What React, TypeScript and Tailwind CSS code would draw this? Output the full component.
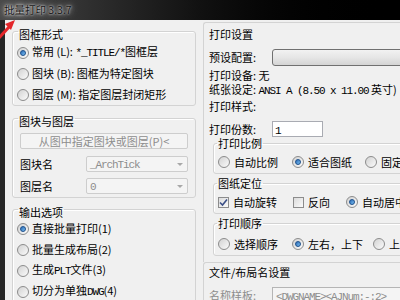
import React from "react";

const M = ({ children }: { children: React.ReactNode }) => (
  <span className="font-['Liberation_Mono',monospace] tracking-[-1.1px]">{children}</span>
);

function Radio({ on }: { on?: boolean }) {
  return (
    <span className="w-[12px] h-[12px] shrink-0 rounded-full border border-[#8c8c8c] bg-gradient-to-br from-[#d2d2d2] to-[#fbfbfb] flex items-center justify-center">
      {on && <span className="w-[6px] h-[6px] rounded-full border border-[#1b4f8c] bg-gradient-to-br from-[#2a6bb5] to-[#7cc0f2]" />}
    </span>
  );
}

function Check({ on }: { on?: boolean }) {
  return (
    <span className="w-[11px] h-[11px] shrink-0 border border-[#8c8c8c] bg-gradient-to-br from-[#dcdcdc] to-[#fafafa] flex items-center justify-center">
      {on && (
        <svg width="9" height="9" viewBox="0 0 9 9">
          <path d="M1 4.5 L3.5 7 L8 1.5" fill="none" stroke="#3b4f86" strokeWidth="1.6" />
        </svg>
      )}
    </span>
  );
}

function Combo({ value }: { value: React.ReactNode }) {
  return (
    <div className="flex-1 h-[16px] rounded-[2px] border border-[#cdcdcd] bg-[#f4f4f4] flex items-center text-[#8d8d8d] pl-[3px]">
      <span className="flex-1">{value}</span>
      <svg width="14" height="10" viewBox="0 0 14 10">
        <path d="M4 4 L10 4 L7 7 Z" fill="#a8a8a8" />
      </svg>
    </div>
  );
}

function Group({ title, children, className = "" }: { title: string; children: React.ReactNode; className?: string }) {
  return (
    <fieldset className={"border border-[#d3d3d3] rounded-[3px] shadow-[inset_1px_1px_0_#fff] " + className}>
      <legend className="ml-[5px] px-[1px] pt-[6px] leading-[12px]">{title}</legend>
      {children}
    </fieldset>
  );
}

function Sub({ title, children, className = "" }: { title: string; children: React.ReactNode; className?: string }) {
  return (
    <fieldset className={"ml-[4px] w-[240px] border border-[#d3d3d3] rounded-[3px] shadow-[inset_1px_1px_0_#fff] " + className}>
      <legend className="ml-[3px] px-[1px] leading-[12px]">{title}</legend>
      {children}
    </fieldset>
  );
}

export default function App() {
  return (
    <div className="relative w-[400px] h-[300px] overflow-hidden bg-black text-[11px] text-black font-['Noto_Sans_CJK_SC',sans-serif]">
      {/* title bar */}
      <div className="h-[20px] flex items-center pl-[4px] bg-gradient-to-r from-[#4a4a4a] via-[#111] to-black">
        <span className="text-[10.5px] text-[#151515] [text-shadow:0_0_2px_#f2f2f2,0_0_5px_#d8d8d8,0_0_9px_#9a9a9a]">批量打印 3.3.7</span>
      </div>

      <div className="flex h-[280px] border-l-[5px] border-[#262626] bg-[#f0f0f0]">
        {/* left column */}
        <div className="w-[196px] shrink-0 pl-[7px] pr-[5px] flex flex-col">
          <Group title="图框形式" className="mt-[2px]">
            <div className="pt-[2px] pl-[4px]">
              <div className="h-[21px] flex items-center gap-[3px]">
                <Radio on />
                <span>常用 (L): <M>*_TITLE/*</M>图框层</span>
              </div>
              <div className="h-[21px] flex items-center gap-[3px]">
                <Radio />
                <span>图块 (B): 图框为特定图块</span>
              </div>
              <div className="h-[21px] flex items-center gap-[3px]">
                <Radio />
                <span>图层 (M): 指定图层封闭矩形</span>
              </div>
            </div>
          </Group>

          <Group title="图块与图层" className="mt-[3px]">
            <div className="px-[7px] pt-[6px] pb-[3px]">
              <div className="h-[16px] rounded-[2px] border border-[#cdcdcd] bg-[#f4f4f4] flex items-center justify-center text-[#8d8d8d]">
                从图中指定图块或图层(P)&lt;
              </div>
              <div className="mt-[7px] h-[16px] flex items-center">
                <span className="w-[66px]">图块名</span>
                <Combo value={<M>_ArchTick</M>} />
              </div>
              <div className="mt-[6px] h-[16px] flex items-center">
                <span className="w-[66px]">图层名</span>
                <Combo value={<M>0</M>} />
              </div>
            </div>
          </Group>

          <Group title="输出选项" className="mt-[2px] flex-1">
            <div className="pl-[4px]">
              <div className="h-[21px] flex items-center gap-[3px]">
                <Radio on />
                <span>直接批量打印(1)</span>
              </div>
              <div className="h-[21px] flex items-center gap-[3px]">
                <Radio />
                <span>批量生成布局(2)</span>
              </div>
              <div className="h-[21px] flex items-center gap-[3px]">
                <Radio />
                <span>生成<M>PLT</M>文件(3)</span>
              </div>
              <div className="h-[21px] flex items-center gap-[3px]">
                <Radio />
                <span>切分为单独<M>DWG</M>(4)</span>
              </div>
            </div>
          </Group>
        </div>

        {/* right column */}
        <div className="w-[260px] shrink-0 pl-[2px] pt-[2px] flex flex-col">
          <div className="border-l border-t border-[#d3d3d3] rounded-tl-[3px] pl-[5px]">
            <div className="pt-[5px] leading-[12px]">打印设置</div>
            <div className="mt-[9px] h-[17px] flex items-center">
              <span className="w-[63px]">预设配置:</span>
              <div className="flex-1 h-[17px] rounded-[3px] border border-[#707070] bg-gradient-to-b from-[#f2f2f2] via-[#e6e6e6] to-[#d4d4d4]" />
            </div>
            <div className="mt-[3px] leading-[13px]">打印设备: 无</div>
            <div className="leading-[13px] mt-px">纸张设定: <M>ANSI A (8.50 x 11.00</M> 英寸)</div>
            <div className="leading-[13px] mt-[2px]">打印样式:</div>
            <div className="mt-[8px] h-[16px] flex items-center">
              <span className="w-[63px]">打印份数:</span>
              <div className="w-[51px] h-[16px] border border-[#a9abb2] bg-white pl-[2px] leading-[14px]">
                <M>1</M>
              </div>
            </div>

            <Sub title="打印比例">
              <div className="pt-[3px] pb-[1px] h-[24px] flex items-center pl-[4px]">
                <span className="w-[74px] flex items-center gap-[4px]"><Radio />自动比例</span>
                <span className="w-[73px] flex items-center gap-[4px]"><Radio on />适合图纸</span>
                <span className="flex items-center gap-[4px]"><Radio />固定比例</span>
              </div>
            </Sub>
            <Sub title="图纸定位" className="mt-[3px]">
              <div className="pt-[3px] pb-[1px] h-[24px] flex items-center pl-[4px]">
                <span className="w-[75px] flex items-center gap-[4px]"><Check on />自动旋转</span>
                <span className="w-[53px] flex items-center gap-[4px]"><Check />反向</span>
                <span className="flex items-center gap-[4px]"><Radio on />自动居中</span>
              </div>
            </Sub>
            <Sub title="打印顺序" className="mt-[3px]">
              <div className="pt-[5px] pb-[1px] h-[26px] flex items-center pl-[4px]">
                <span className="w-[74px] flex items-center gap-[4px]"><Radio />选择顺序</span>
                <span className="w-[81px] flex items-center gap-[4px]"><Radio on />左右，上下</span>
                <span className="flex items-center gap-[4px]"><Radio />上下，左右</span>
              </div>
            </Sub>
            <div className="h-[6px]" />
          </div>

          <div className="flex-1 border-l border-t border-[#d3d3d3] rounded-tl-[3px] pl-[5px]">
            <div className="pt-[3px] leading-[12px]">文件/布局名设置</div>
            <div className="mt-[9px] h-[16px] flex items-center">
              <span className="w-[63px] text-[#8d8d8d]">名称样板:</span>
              <div className="flex-1 h-[16px] border border-[#b5b5b5] bg-[#f4f4f4] pl-[3px] text-[#8d8d8d] leading-[14px]">
                <M>&lt;DWGNAME&gt;&lt;AJNum:-:2&gt;</M>
              </div>
            </div>
          </div>
        </div>
      </div>

      {/* red annotation arrow */}
      <svg className="absolute left-0 top-[15px]" width="22" height="26" viewBox="0 0 22 26">
        <path d="M-2 24 L10 11" stroke="#e3262a" strokeWidth="3" />
        <path d="M15 5 L5 9 L11 15 Z" fill="#e3262a" />
      </svg>
    </div>
  );
}
